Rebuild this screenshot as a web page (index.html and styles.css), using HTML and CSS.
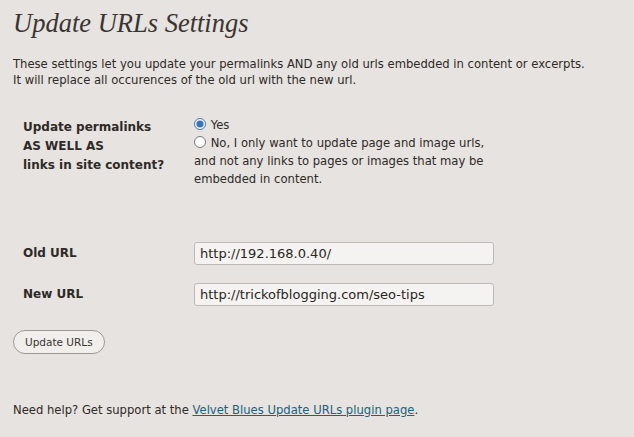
FILE: index.html
```html
<!DOCTYPE html>
<html lang="en">

<head>
    <meta charset="UTF-8">
    <title>Update URLs Settings</title>
    <link rel="stylesheet" href="styles.css">
</head>

<body>
    <div class="wrap">
        <h2>Update URLs Settings</h2>
        <p class="intro">These settings let you update your permalinks AND any old urls embedded in content or excerpts.<br>
            It will replace all occurences of the old url with the new url.</p>

        <form id="updateForm">
            <table class="form-table">
                <tr class="row-links">
                    <th>Update permalinks<br>AS WELL AS<br>links in site content?</th>
                    <td>
                        <label class="radio"><input type="radio" name="links" value="yes" checked> Yes</label>
                        <label class="radio"><input type="radio" name="links" value="no"> No, I only want to update page and image urls,<br>
                            and not any links to pages or images that may be<br>embedded in content.</label>
                    </td>
                </tr>
                <tr class="row-url first">
                    <th>Old URL</th>
                    <td><input type="text" class="url" value="http://192.168.0.40/"></td>
                </tr>
                <tr class="row-url">
                    <th>New URL</th>
                    <td><input type="text" class="url" value="http://trickofblogging.com/seo-tips"></td>
                </tr>
            </table>
            <button type="submit" class="button">Update URLs</button>
        </form>

        <p class="help">Need help? Get support at the <a href="#">Velvet Blues Update URLs plugin page</a>.</p>
    </div>
</body>

</html>
```

FILE: styles.css
```css
body {
    margin: 0;
    background-color: #e6e3e0;
    color: #2f2a26;
    font-family: "DejaVu Sans", sans-serif;
    font-size: 11.6px;
}

.wrap {
    padding: 5px 13px;
}

h2 {
    margin: 0;
    font-family: "Liberation Serif", "Times New Roman", serif;
    font-style: italic;
    font-weight: normal;
    font-size: 26.5px;
    color: #3a3530;
    line-height: 36px;
}

.intro {
    margin: 15px 0 0;
    line-height: 16px;
}

.form-table {
    border-collapse: collapse;
    margin-top: 25px;
}

.form-table th {
    width: 171px;
    padding: 0 0 0 10px;
    text-align: left;
    vertical-align: top;
    font-size: 12px;
    font-weight: bold;
    line-height: 19px;
}

.form-table td {
    padding: 0;
    vertical-align: top;
}

.row-links th {
    padding-top: 5px;
}

.row-links td {
    padding-top: 3px;
}

.radio {
    display: block;
    line-height: 18px;
}

.radio input {
    margin: 0 1px 0 0;
    width: 12px;
    height: 12px;
    vertical-align: -1px;
    accent-color: #3a73b8;
}

.row-url th {
    padding-top: 20px;
}

.row-url td {
    padding-top: 18px;
}

.row-url.first th {
    padding-top: 56px;
}

.row-url.first td {
    padding-top: 54px;
}

.url {
    box-sizing: border-box;
    width: 300px;
    height: 23px;
    padding: 0 5px;
    border: 1px solid #bdbab6;
    border-radius: 3px;
    background-color: #f4f3f1;
    font-family: "DejaVu Sans", sans-serif;
    font-size: 13px;
    color: #2a2622;
}

.button {
    display: block;
    margin-top: 24px;
    height: 24px;
    padding: 0 11px;
    border: 1px solid #9c9894;
    border-radius: 12px;
    background-color: #f1efec;
    font-family: "DejaVu Sans", sans-serif;
    font-size: 10.5px;
    color: #3a3530;
    cursor: pointer;
}

.help {
    margin: 49px 0 0;
}

.help a {
    color: #21617a;
}
```
